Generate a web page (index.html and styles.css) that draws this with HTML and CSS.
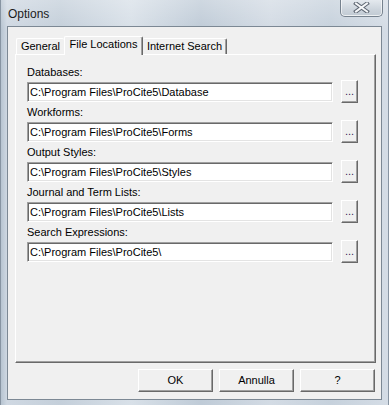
FILE: index.html
```html
<!DOCTYPE html>
<html>
<head>
<meta charset="utf-8">
<link rel="stylesheet" href="styles.css">
</head>
<body>
<div class="window">
  <div class="titlebar">
    <span class="title">Options</span>
    <div class="close">
      <svg width="17" height="11" viewBox="0 0 17 11">
        <path d="M3 1.5 L14 9.5 M14 1.5 L3 9.5" stroke="#5b6470" stroke-width="4" stroke-linecap="square"/>
        <path d="M3 1.5 L14 9.5 M14 1.5 L3 9.5" stroke="#f4f6f8" stroke-width="2" stroke-linecap="square"/>
      </svg>
    </div>
  </div>
  <div class="client">
    <div class="tabs">
      <div class="tab tab-general">General</div>
      <div class="tab tab-files active">File Locations</div>
      <div class="tab tab-internet">Internet Search</div>
    </div>
    <div class="panel">
      <div class="field">
        <div class="label">Databases:</div>
        <div class="row"><div class="input">C:\Program Files\ProCite5\Database</div><div class="browse">...</div></div>
      </div>
      <div class="field">
        <div class="label">Workforms:</div>
        <div class="row"><div class="input">C:\Program Files\ProCite5\Forms</div><div class="browse">...</div></div>
      </div>
      <div class="field">
        <div class="label">Output Styles:</div>
        <div class="row"><div class="input">C:\Program Files\ProCite5\Styles</div><div class="browse">...</div></div>
      </div>
      <div class="field">
        <div class="label">Journal and Term Lists:</div>
        <div class="row"><div class="input">C:\Program Files\ProCite5\Lists</div><div class="browse">...</div></div>
      </div>
      <div class="field">
        <div class="label">Search Expressions:</div>
        <div class="row"><div class="input">C:\Program Files\ProCite5\</div><div class="browse">...</div></div>
      </div>
    </div>
    <div class="buttons">
      <div class="btn">OK</div>
      <div class="btn">Annulla</div>
      <div class="btn">?</div>
    </div>
  </div>
</div>
</body>
</html>
```
FILE: styles.css
```css
* { box-sizing: border-box; }
html, body {
  margin: 0;
  padding: 0;
}
body {
  width: 389px;
  height: 405px;
  overflow: hidden;
  font-family: "Liberation Sans", Arial, sans-serif;
  font-size: 11px;
  color: #000;
}
.window {
  width: 389px;
  height: 405px;
  display: flex;
  flex-direction: column;
  padding-bottom: 5px;
  border-left: 1px solid #8794a2;
  border-right: 1px solid #8794a2;
  background:
    linear-gradient(180deg, rgba(255,255,255,0.25), rgba(255,255,255,0) 30px),
    linear-gradient(90deg, #b7c4d1 0px, #cfd8e2 6px, #c4cfda 60px, #d8e0e8 130px, #bfcbd7 200px, #d3dbe4 270px, #c6d1dc 330px, #d5dde6 389px);
}
.titlebar {
  height: 26px;
  display: flex;
  justify-content: space-between;
  align-items: flex-start;
  padding-left: 7px;
}
.title {
  margin-top: 7px;
  font-size: 12px;
  line-height: 14px;
  color: #1c1c1c;
}
.close {
  width: 43px;
  height: 17px;
  margin-right: 5px;
  border: 1px solid #76828e;
  border-top: none;
  border-radius: 0 0 5px 5px;
  background: linear-gradient(180deg, #e4e9ee, #ccd4dc 60%, #c1cad3);
  box-shadow: inset 0 -1px 0 rgba(255,255,255,0.7), inset 1px 0 0 rgba(255,255,255,0.6), inset -1px 0 0 rgba(255,255,255,0.6);
  display: flex;
  align-items: center;
  justify-content: center;
}
.close svg { display: block; margin-top: -1px; }
.client {
  flex: 1;
  margin: 0 6px;
  border: 1px solid #7c8894;
  background: #f0f0f0;
  display: flex;
  flex-direction: column;
}
.tabs {
  height: 27px;
  display: flex;
  align-items: flex-end;
  padding-left: 8px;
}
.tab {
  height: 16px;
  background: #f0f0f0;
  border-top: 1px solid #fff;
  border-left: 1px solid #fff;
  border-right: 1px solid #696969;
  box-shadow: inset -1px 0 0 #a0a0a0;
  border-radius: 2px 2px 0 0;
  text-align: center;
  line-height: 14px;
}
.tab-general { width: 48px; border-right: none; box-shadow: none; }
.tab-files { width: 79px; }
.tab-internet { width: 84px; border-left: none; }
.tab.active {
  height: 19px;
  margin-bottom: -1px;
  position: relative;
  z-index: 1;
  line-height: 15px;
}
.panel {
  height: 309px;
  margin: 0 5px 0 7px;
  border-top: 1px solid #fff;
  border-left: 1px solid #fff;
  border-right: 1px solid #696969;
  border-bottom: 1px solid #696969;
  box-shadow: inset -1px -1px 0 #a0a0a0;
  padding: 11px 0 0 11px;
  display: flex;
  flex-direction: column;
  gap: 3px;
}
.field {
  display: flex;
  flex-direction: column;
  gap: 1px;
}
.label {
  height: 13px;
  line-height: 13px;
}
.row {
  display: flex;
  gap: 8px;
  height: 23px;
}
.input {
  width: 306px;
  height: 20px;
  margin-top: 2px;
  background: #fff;
  border-top: 1px solid #a0a0a0;
  border-left: 1px solid #a0a0a0;
  border-right: 1px solid #fff;
  border-bottom: 1px solid #fff;
  box-shadow: inset 1px 1px 0 #696969, inset -1px -1px 0 #e3e3e3;
  padding: 0 2px;
  line-height: 18px;
  white-space: nowrap;
  overflow: hidden;
}
.browse {
  width: 17px;
  height: 23px;
  background: #f0f0f0;
  border-top: 1px solid #fff;
  border-left: 1px solid #fff;
  border-right: 1px solid #696969;
  border-bottom: 1px solid #696969;
  box-shadow: inset -1px -1px 0 #a0a0a0;
  text-align: center;
  line-height: 20px;
  color: #3a1a5a;
}
.buttons {
  display: flex;
  justify-content: flex-end;
  gap: 6px;
  margin: 6px 6px 0 0;
}
.btn {
  width: 75px;
  height: 23px;
  background: #f0f0f0;
  border-top: 1px solid #fff;
  border-left: 1px solid #fff;
  border-right: 1px solid #696969;
  border-bottom: 1px solid #696969;
  box-shadow: inset -1px -1px 0 #a0a0a0;
  text-align: center;
  line-height: 21px;
  font-size: 11px;
}
```
